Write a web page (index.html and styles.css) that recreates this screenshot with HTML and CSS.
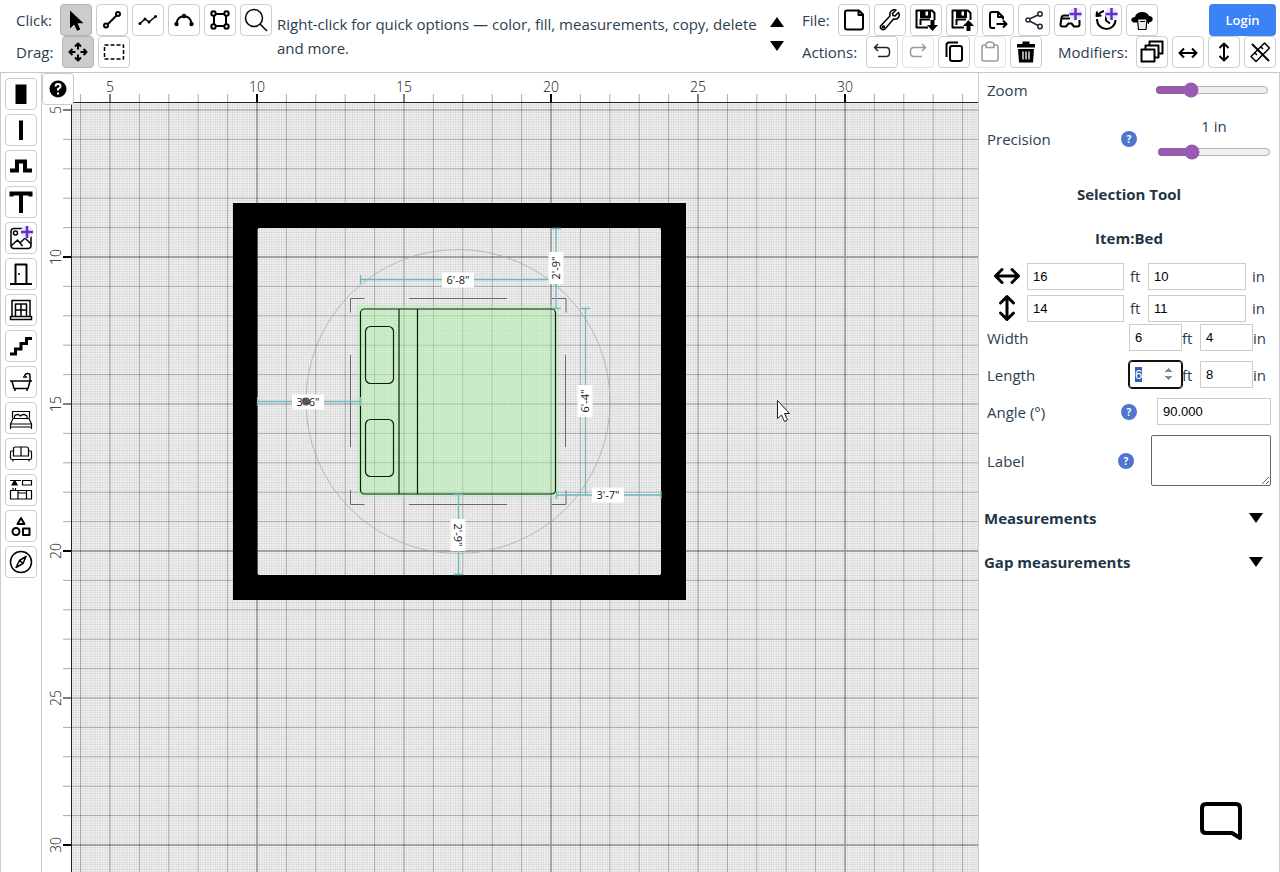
FILE: index.html
```html
<!DOCTYPE html>
<html lang="en">
<head>
<meta charset="utf-8">
<title>Floor plan editor</title>
<link rel="stylesheet" href="styles.css">
</head>
<body>
<header class="topbar">
  <div class="rows tools">
    <div class="row">
      <span class="lbl lbl-click">Click:</span>
      <button class="btn on" aria-label="Select"><svg class="ic solid" viewBox="0 0 24 24"><path d="M6 2.500v18l4.200-4 2.900 6.300 3.200-1.400-2.800-6.200h6z"/></svg></button>
      <button class="btn" aria-label="Line"><svg class="ic" viewBox="0 0 24 24"><path d="M7.500 16.500l9.500-9.500"/><circle cx="6" cy="17.500" r="2"/><circle cx="18" cy="6" r="2"/></svg></button>
      <button class="btn" aria-label="Polyline"><svg class="ic thin" viewBox="0 0 24 24"><path d="M4 15.500l5-4.500 4 3 6.500-5.500"/><g class="dot"><circle cx="4" cy="15.500" r="1.500"/><circle cx="9" cy="11" r="1.500"/><circle cx="13" cy="14" r="1.500"/><circle cx="19.500" cy="8.500" r="1.500"/></g></svg></button>
      <button class="btn" aria-label="Arc"><svg class="ic" viewBox="0 0 24 24"><path d="M4.500 16C5 5.500 19 5.500 19.500 16"/><g class="dot"><circle cx="4.500" cy="16" r="2.200"/><circle cx="12" cy="8" r="2.200"/><circle cx="19.500" cy="16" r="2.200"/></g></svg></button>
      <button class="btn" aria-label="Rectangle"><svg class="ic" viewBox="0 0 24 24"><path d="M8 6h8M8 18h8M6 8v8M18 8v8"/><circle cx="5.500" cy="5.500" r="2.200"/><circle cx="18.500" cy="5.500" r="2.200"/><circle cx="5.500" cy="18.500" r="2.200"/><circle cx="18.500" cy="18.500" r="2.200"/></svg></button>
      <button class="btn" aria-label="Search"><svg class="ic thin" viewBox="0 0 24 24"><circle cx="10" cy="10" r="8.500"/><path d="M16 16l7 7"/></svg></button>
    </div>
    <div class="row">
      <span class="lbl lbl-drag">Drag:</span>
      <button class="btn on" aria-label="Move"><svg class="ic" viewBox="0 0 24 24"><path d="M12 3.500v6M12 14.500v6M3.500 12h6M14.500 12h6M9 6.500l3-3 3 3M9 17.500l3 3 3-3M6.500 9l-3 3 3 3M17.500 9l3 3-3 3"/></svg></button>
      <button class="btn" aria-label="Box select"><svg class="ic thin" viewBox="0 0 24 24"><rect x="2.500" y="5" width="19" height="14" stroke-dasharray="4 2"/></svg></button>
    </div>
  </div>
  <p class="hint">Right-click for quick options — color, fill, measurements, copy, delete and more.</p>
  <div class="hint-nav">
    <button class="tri" aria-label="Previous tip"><svg width="14" height="12" viewBox="0 0 14 12"><path d="M7 1l7 10H0z"/></svg></button>
    <button class="tri" aria-label="Next tip"><svg width="14" height="12" viewBox="0 0 14 12"><path d="M7 11l7-10H0z"/></svg></button>
  </div>
  <div class="rows commands">
    <div class="row">
      <span class="lbl lbl-file">File:</span>
      <button class="btn" aria-label="New"><svg class="ic" viewBox="0 0 24 24"><path d="M5 2.500h12l4 4v13q0 2-2 2H5q-2 0-2-2v-15q0-2 2-2zM16.500 3v4H21"/></svg></button>
      <button class="btn" aria-label="Settings"><svg class="ic thin" viewBox="0 0 24 24"><path d="M20.500 4.500l-3.500 3.500-2-.500-.500-2 3.500-3.500c-3-1-7 1-6 6L3 17.500c-2 2.500 1.500 5.500 4 3.500l8.500-10c5 1 7-3.500 5-6.500z"/><circle cx="5.500" cy="19" r="1"/></svg></button>
      <button class="btn" aria-label="Save"><svg class="ic" viewBox="0 0 24 24"><path d="M14 19.500H2.500v-17H18l2.500 2.500v7M6.500 17v-5.500H16"/><path class="fill" d="M6 2h11v8H6z"/><path class="white" d="M11.500 3.500H14v4h-2.500z"/><path class="fill" d="M16.500 12h4v5H24l-5.500 6-5.500-6h3.500z"/></svg></button>
      <button class="btn" aria-label="Open"><svg class="ic" viewBox="0 0 24 24"><path d="M14 19.500H2.500v-17H18l2.500 2.500v7M6.500 17v-5.500H16"/><path class="fill" d="M6 2h11v8H6z"/><path class="white" d="M11.500 3.500H14v4h-2.500z"/><path class="fill" d="M16.500 23h4v-5H24l-5.500-6-5.500 6h3.500z"/></svg></button>
      <button class="btn" aria-label="Export"><svg class="ic" viewBox="0 0 24 24"><path d="M9 20H6q-2 0-2-2V6q0-2 2-2h6l5 5v2.500M12 4v5h5M10.500 16H20M17 12.500l3.500 3.500-3.500 3.500"/></svg></button>
      <button class="btn" aria-label="Share"><svg class="ic thin slate" viewBox="0 0 24 24"><path d="M7.500 11l8.500-4M7.500 13l8.500 4.500"/><circle cx="6" cy="12" r="2"/><circle cx="18" cy="6" r="2.200"/><circle cx="18" cy="18.500" r="2.200"/></svg></button>
      <button class="btn" aria-label="View in 3D"><svg class="ic" viewBox="0 0 24 24"><path d="M11 7.500H6q-2 0-2.500 2l-1 7q0 2 2 2H8l2.500-3h3l2.500 3h3.500q2 0 2-2V12M3 10.500h9"/><circle class="halo" cx="17.500" cy="6" r="6.500"/><path class="plus" d="M17.500 0v12M11.500 6h12"/></svg></button>
      <button class="btn" aria-label="History"><svg class="ic" viewBox="0 0 24 24"><path d="M3 3.500l-.500 4.500 5-.500M3 11c0 13 18 13 18.500 1M3 8q3-4 7-5M12 7v5.500l4 3"/><circle class="halo" cx="17.500" cy="6" r="6.500"/><path class="plus" d="M17.500 0v12M11.500 6h12"/></svg></button>
      <button class="btn" aria-label="Cloud files"><svg class="ic" viewBox="0 0 24 24"><path class="fill" d="M3.500 14.500C0 13 1 9 5 9c1-6 12-7 14-1 5 0 5 6 0 6.500z"/><path class="paper" d="M7.500 11h9.500l-1 10.500H8.500z"/><path class="fine" d="M10 13.500h5M10 9.500l.500-1.500h8v8"/></svg></button>
      <button class="login">Login</button>
    </div>
    <div class="row">
      <span class="lbl lbl-actions">Actions:</span>
      <button class="btn" aria-label="Undo"><svg class="ic thin slate" viewBox="0 0 24 24"><path d="M8 4L4.500 7.500 8 11M5 7.500h11q3.500 0 3.500 3.500v2q0 3.500-3.500 3.500H8"/></svg></button>
      <button class="btn off" disabled aria-label="Redo"><svg class="ic thin" viewBox="0 0 24 24"><path d="M16 4l3.500 3.500L16 11M19 7.500H8q-3.500 0-3.500 3.500v2q0 3.500 3.500 3.500h8"/></svg></button>
      <button class="btn" aria-label="Copy"><svg class="ic" viewBox="0 0 24 24"><rect x="8" y="6" width="12" height="15" rx="2"/><path d="M4.500 17V5q0-2.500 2.500-2.500h9"/></svg></button>
      <button class="btn off" disabled aria-label="Paste"><svg class="ic thin" viewBox="0 0 24 24"><path d="M8 5H6Q4 5 4 7v12q0 2 2 2h12q2 0 2-2V7q0-2-2-2h-2M8 7.500V5q0-3 4-3t4 3v2.500z"/></svg></button>
      <button class="btn" aria-label="Delete"><svg class="ic" viewBox="0 0 24 24"><path class="fill" d="M8.500 4V1.500h7V4H21v3.500H3V4zM4 9h16l-1 13.500H5z"/><path class="slots" d="M9 11.500v8M12 11.500v8M15 11.500v8"/></svg></button>
      <span class="lbl lbl-mod">Modifiers:</span>
      <button class="btn" aria-label="Duplicate"><svg class="ic" viewBox="0 0 24 24"><rect x="1.500" y="9.500" width="13" height="12"/><path d="M5.500 9V5.500h13v12H15M9.500 5V1.500h13v12H19"/></svg></button>
      <button class="btn" aria-label="Flip horizontal"><svg class="ic" viewBox="0 0 24 24"><path d="M4 13h16M8 8.500L3.500 13 8 17.500M16 8.500l4.500 4.500-4.500 4.500"/></svg></button>
      <button class="btn" aria-label="Flip vertical"><svg class="ic" viewBox="0 0 24 24"><path d="M12 4v16M7.500 8L12 3.500 16.500 8M7.500 16l4.500 4.500 4.500-4.500"/></svg></button>
      <button class="btn" aria-label="Measurements off"><svg class="ic thin" viewBox="0 0 24 24"><path d="M3 16.500L16.500 3l5 5L8 21.500zM7 13l2 2M10 10l2 2M13 7l2 2"/><path class="heavy" d="M4 4l17 17"/></svg></button>
    </div>
  </div>
</header>

<div class="body">
  <nav class="palette" aria-label="Items">
    <button class="btn" aria-label="Wall"><svg class="ic" viewBox="0 0 24 24"><path class="fill" d="M6.500 2.500h11v19.500h-11z"/></svg></button>
    <button class="btn" aria-label="Thin wall"><svg class="ic" viewBox="0 0 24 24"><path class="fill" d="M10 2.500h4V22h-4z"/></svg></button>
    <button class="btn" aria-label="Polygon wall"><svg class="ic" viewBox="0 0 24 24"><path class="wall" d="M1 16.500h7v-9h8v9h7"/></svg></button>
    <button class="btn" aria-label="Text"><svg class="ic" viewBox="0 0 24 24"><path class="wall" d="M2.500 6.500V3.500h19v3M12 3v20"/></svg></button>
    <button class="btn" aria-label="Image"><svg class="ic thin" viewBox="0 0 24 24"><rect x="2" y="2.500" width="20" height="20" rx="3"/><circle cx="6.500" cy="7" r="2"/><path d="M2 20l6.500-6 5 6M11 17l5-5 6 6"/><circle class="halo" cx="18" cy="6" r="6.500"/><path class="plus" d="M18 0v12M12 6h12"/></svg></button>
    <button class="btn" aria-label="Door"><svg class="ic" viewBox="0 0 24 24"><path d="M6.500 21.500v-19h11v19M1 22h22"/><circle class="fill" cx="10" cy="12" r="1"/></svg></button>
    <button class="btn" aria-label="Window"><svg class="ic thin" viewBox="0 0 24 24"><path d="M3 18V2.500h18V18M1.500 18.500h21v3h-21zM6.500 18V6h11v12M12 6v12M6.500 12h11"/></svg></button>
    <button class="btn" aria-label="Stairs"><svg class="ic" viewBox="0 0 24 24"><path class="tee" d="M1 20h5.500v-5H12v-5.500h5.500v-5H23"/></svg></button>
    <button class="btn" aria-label="Bathroom"><svg class="ic thin" viewBox="0 0 24 24"><path d="M1 11h22M3 11l2 7.500h14l2-7.500M6 19v2M18 19v2M21 11V6q0-3-3-2.500-2 .500-2.500 2.500M14 7h4"/></svg></button>
    <button class="btn" aria-label="Bedroom"><svg class="ic hair" viewBox="0 0 24 24"><path d="M3.500 12V5.500h17V12M1.500 23v-5L4 12.500h16l2.500 5.500v5M1.500 18h21M1.500 21h21M5.500 12V10q3-3 6 0 3-3 6.500 0v2"/></svg></button>
    <button class="btn" aria-label="Living room"><svg class="ic hair" viewBox="0 0 24 24"><path d="M4.500 9V7q0-2 2-2h11q2 0 2 2v2M12 5v9M4.500 9v5h15V9M4.500 9H2q-.500 0-.500 1v6q0 1.500 1.500 1.500h18q1.500 0 1.500-1.500v-6q0-1-.500-1h-2.500M4 17.500v2M20 17.500v2"/></svg></button>
    <button class="btn" aria-label="Kitchen"><svg class="ic hair" viewBox="0 0 24 24"><path d="M1 2.500h11M13.500 2.500h9v4.500h-9zM1.500 12.500h21v8.500h-21zM9 12.500V21M17.500 12.500V21M9 15h8.500M4 10v2M6.500 10v2"/><path class="fill" d="M5 2.500L2 7.500h7l-2.500-5z"/></svg></button>
    <button class="btn" aria-label="Shapes"><svg class="ic" viewBox="0 0 24 24"><path d="M12 4l3.500 6h-7z"/><circle cx="7" cy="17.500" r="3.500"/><rect x="14" y="14.500" width="6.500" height="6.500"/></svg></button>
    <button class="btn" aria-label="Compass"><svg class="ic thin" viewBox="0 0 24 24"><circle cx="12" cy="12" r="10.500"/><path d="M17 6.500l-3 7-7 4 3.500-7zM10.500 10.500l3.500 3"/></svg></button>
  </nav>

  <main class="stage">
    <svg class="plan" id="plan" role="img" aria-label="Floor plan">
      <g transform="translate(-42 -73)">
        <rect class="paperbg" x="72" y="103" width="4000" height="4000"/>
        <path id="gridFine" class="g-fine"/>
        <path id="gridFoot" class="g-foot"/>
        <path id="gridFive" class="g-five"/>
        <path id="gridTen" class="g-ten"/>
        <g id="ruler" class="ruler"></g>
        <path class="axis" d="M4000 102.500H71.500V4000"/>

        <path class="room" fill-rule="evenodd" d="M233 203h453v397H233zM259 228h401l1 1v345l-1 1H259l-1.500-1V229z"/>
        <circle class="orbit" cx="458" cy="401.500" r="152"/>

        <rect class="glow" x="357" y="305" width="201" height="192"/>
        <g class="bed">
          <rect x="360.500" y="309" width="195" height="185" rx="4"/>
          <path d="M399 309v185M417.500 309v185"/>
          <rect x="365.500" y="326.500" width="28" height="57" rx="5"/>
          <rect x="365.500" y="419.500" width="28" height="57" rx="5"/>
        </g>
        <path class="handles" d="M350.500 312.500v-14h14M409 298.500h98M552 298.500h14v14M350.500 355v92M565.500 355v92M350.500 490v14.500h14M409 504.500h98M552 504.500h14v-14"/>

        <path class="dim" d="M360.500 279.500H555M360.500 275v9M556 228v80M552 228.500h9M552 308.500h9M585.500 309v185M581 308.500h9M257.500 401.500H360M257.500 397v9M360.500 397v9M556 495H661M556.500 491v8M661 491v8M458.500 495v80M454 494.500h9M454 574.500h9"/>
        <g class="tag" transform="translate(458 280)"><rect x="-16" y="-7.500" width="32" height="15"/><text y="4">6'-8"</text></g>
        <g class="tag" transform="translate(556 268) rotate(-90)"><rect x="-16" y="-7.500" width="32" height="15"/><text y="4">2'-9"</text></g>
        <g class="tag" transform="translate(585 401) rotate(-90)"><rect x="-16" y="-7.500" width="32" height="15"/><text y="4">6'-4"</text></g>
        <g class="tag" transform="translate(608 495)"><rect x="-16" y="-7.500" width="32" height="15"/><text y="4">3'-7"</text></g>
        <g class="tag" transform="translate(458 535) rotate(90)"><rect x="-16" y="-7.500" width="32" height="15"/><text y="4">2'-9"</text></g>
        <g class="tag" transform="translate(308 402)"><rect x="-16" y="-7.500" width="32" height="15"/><text y="4">3'-6"</text></g>
        <circle class="knob" cx="306" cy="401.500" r="4"/>
        <path class="pointer" d="M777.500 400.500v18l4-3.500 3 6.500 3-1.500-3-6.500h5z"/>
      </g>
    </svg>
    <button class="btn help" aria-label="Help"><svg class="ic" viewBox="0 0 24 24"><circle class="fill" cx="12" cy="12" r="8.500"/><path class="qm" d="M9.500 9.500q0-2.500 2.500-2.500t2.500 2.300Q14.500 11 12 12v1.500M12 15.500v2"/></svg></button>
  </main>

  <aside class="panel">
    <div class="field f-zoom"><label for="zoom">Zoom</label><input id="zoom" type="range" value="29"></div>
    <div class="field f-prec"><label for="prec">Precision</label><button class="q" aria-label="About precision">?</button>
      <div class="stack"><output for="prec">1 in</output><input id="prec" type="range" value="28"></div></div>
    <h2>Selection Tool</h2>
    <h2>Item:Bed</h2>
    <div class="pos">
      <svg class="arrow" viewBox="0 0 28 28"><path d="M3 14h22M9 7.500L2.500 14 9 20.500M19 7.500l6.500 6.500-6.500 6.500"/></svg>
      <input id="xft" type="number" value="16"><label for="xft">ft</label><input id="xin" type="number" value="10"><label for="xin">in</label>
    </div>
    <div class="pos">
      <svg class="arrow" viewBox="0 0 28 28"><path d="M14 3v22M7.500 9L14 2.500 20.500 9M7.500 19l6.500 6.500 6.500-6.500"/></svg>
      <input id="yft" type="number" value="14"><label for="yft">ft</label><input id="yin" type="number" value="11"><label for="yin">in</label>
    </div>
    <div class="field size"><span class="name">Width</span><input id="wft" type="number" value="6"><label for="wft">ft</label><input id="win" type="number" value="4"><label for="win">in</label></div>
    <div class="field size"><span class="name">Length</span><input class="active" id="lft" type="number" value="6"><label for="lft">ft</label><input id="lin" type="number" value="8"><label for="lin">in</label></div>
    <div class="field f-angle"><label for="angle">Angle (°)</label><button class="q" aria-label="About angle">?</button><input id="angle" type="text" value="90.000"></div>
    <div class="field f-label"><label for="lab">Label</label><button class="q" aria-label="About label">?</button><textarea id="lab"></textarea></div>
    <button class="fold">Measurements<svg width="14" height="12" viewBox="0 0 14 12"><path d="M7 11l7-10H0z"/></svg></button>
    <button class="fold">Gap measurements<svg width="14" height="12" viewBox="0 0 14 12"><path d="M7 11l7-10H0z"/></svg></button>
  </aside>
</div>
<button class="chat" aria-label="Chat"><svg width="44" height="40" viewBox="0 0 44 40"><path d="M7 3h30q4 0 4 4v30l-8-5H7q-4 0-4-4V7q0-4 4-4z"/></svg></button>
<script src="plan.js"></script>
</body>
</html>
```
FILE: styles.css
```css
* { box-sizing: border-box; }
body {
  margin: 0;
  height: 100vh;
  display: flex;
  flex-direction: column;
  overflow: hidden;
  background: #fff;
  color: #2c3e50;
  font: 15px/24px "Open Sans", "Noto Sans", sans-serif;
}
button { font: inherit; color: inherit; padding: 0; margin: 0; background: none; border: 0; }
svg { display: block; }

.topbar { display: flex; padding: 4px 4px 4px 16px; border-bottom: 1px solid #c8c8c8; }
.row { display: flex; gap: 4px; align-items: center; }
.lbl { white-space: nowrap; }
.lbl-click { width: 40px; }
.lbl-drag { width: 42px; }
.lbl-file { width: 32px; }
.lbl-actions { width: 60px; }
.lbl-mod { width: 74px; margin-left: 12px; }
.hint { flex: 1; margin: 0; padding: 8px 0 0 5px; }
.hint-nav { width: 32px; display: flex; flex-direction: column; gap: 12px; padding-top: 12px; }
.tri, .tri svg { height: 12px; width: 14px; }

.btn {
  flex: none;
  width: 32px;
  height: 32px;
  display: grid;
  place-items: center;
  background: #fff;
  border: 1px solid #ccc;
  border-radius: 4px;
}
.btn.on { background: #ccc; border-color: #b4b4b4; }
.btn.off { border-color: #e2e2e2; }
.btn.off .ic { stroke: #999; }
.ic { width: 24px; height: 24px; fill: none; stroke: #000; stroke-width: 2; stroke-linejoin: round; overflow: visible; }
.ic.thin { stroke-width: 1.5; }
.ic.hair { stroke-width: 1.2; }
.ic.solid { fill: #000; stroke: none; }
.ic.slate { stroke: #223; }
.fill, .dot { fill: #000; stroke: none; }
.white { fill: #fff; stroke: none; }
.paper { fill: #eee; stroke-width: 1.2; }
.fine { stroke-width: 1; }
.slots { stroke: #fff; stroke-width: 1.3; }
.heavy { stroke-width: 2; }
.halo { fill: #e9e4f6; stroke: none; }
.plus { stroke: #6230c8; stroke-width: 2.5; }
.wall { stroke-width: 4; stroke-linejoin: miter; }
.tee { stroke-width: 3; stroke-linejoin: miter; }
.qm { stroke: #fff; }
.login { margin-left: auto; width: 67px; height: 32px; border-radius: 4px; background: #3b82f6; color: #fff; font-weight: 600; font-size: 13px; }

.body { flex: 1; min-height: 0; display: flex; }
.palette { width: 42px; display: flex; flex-direction: column; gap: 4px; padding: 5px 4px; border: solid #ccc; border-width: 0 1px; }
.stage { flex: 1; min-width: 0; position: relative; overflow: hidden; }
.help { position: absolute; left: 0; top: 0; }
.plan { width: 100%; height: 100%; }
.paperbg { fill: #f3f3f3; }
.g-fine, .g-foot, .g-five, .g-ten { fill: none; }
.g-fine { stroke: rgba(0, 0, 0, .09); stroke-width: .8; }
.g-foot { stroke: rgba(0, 0, 0, .3); }
.g-five { stroke: rgba(0, 0, 0, .4); }
.g-ten { stroke: rgba(0, 0, 0, .42); stroke-width: 1.4; }
.ruler { font-size: 14px; font-weight: 300; }
.ruler text { fill: #111; text-anchor: middle; }
.ruler .minor { stroke: #aaa; }
.ruler .mid { stroke: #555; stroke-width: 1.5; }
.ruler .major { stroke: #000; stroke-width: 2; }
.axis { fill: none; stroke: #222; }
.room { fill: #000; }
.orbit { fill: none; stroke: #aaa; stroke-width: .8; }
.glow { fill: rgba(171, 240, 168, .5); filter: blur(1px); }
.bed { fill: none; stroke: #0b1f0b; stroke-width: 1.2; }
.handles { fill: none; stroke: #666; }
.dim { fill: none; stroke: #6bb9bd; stroke-width: 1.3; }
.tag rect { fill: #fff; }
.tag text { fill: #111; font-size: 11px; text-anchor: middle; }
.knob { fill: rgba(50, 50, 50, .8); }
.pointer { fill: #fff; stroke: #222; }

.panel { width: 302px; border: solid #ccc; border-width: 0 1px; padding: 5px 8px 0; overflow: hidden; }
.panel h2 { margin: 0 0 20px; font-size: 15px; line-height: 24px; font-weight: 700; text-align: center; color: #213547; }
.field { display: flex; align-items: center; }
.field > label:first-child, .name { flex: 1; }
input[type="range"] { width: 114px; height: 16px; margin: 0; accent-color: #9b59b6; display: block; }
.f-zoom { height: 24px; padding-right: 2px; }
.f-prec { height: 56px; margin: 9px 0 15px; }
.stack { margin-left: 20px; width: 114px; text-align: center; }
.stack output { display: block; height: 30px; }
.stack input { margin-bottom: 4px; }
.q { width: 16px; height: 16px; border-radius: 50%; background: #4f74d2; color: #fff; font-size: 10px; font-weight: 700; line-height: 16px; text-align: center; }
input[type="number"], input[type="text"] {
  height: 27px;
  margin: 0;
  border: 1px solid #ccc;
  padding: 0 5px;
  font: 13px "Liberation Sans", Arial, sans-serif;
  color: #000;
  background: #fff;
}
input[type="number"]::-webkit-inner-spin-button { opacity: 0; }
input.active::-webkit-inner-spin-button { opacity: 1; }
input.active, input.active:focus { border-color: #111; border-radius: 3px; outline: 1px solid #111; outline-offset: 0; }
input::selection { background: #2f62b5; color: #fff; }
.pos { display: grid; grid-template-columns: 40px 97px 24px 98px 1fr; align-items: center; height: 32px; }
.pos label { padding-left: 6px; }
.pos input { width: 100%; }
.arrow { width: 28px; height: 28px; margin-left: 6px; fill: none; stroke: #000; stroke-width: 3; stroke-linecap: round; stroke-linejoin: round; }
h2 + .pos { margin-top: -10px; }
.size { height: 27px; margin-bottom: 10px; }
.size input { width: 53px; }
.size label { width: 18px; }
.f-angle { height: 27px; margin-bottom: 10px; }
.f-angle input { width: 114px; margin-left: 20px; }
.f-label { height: 51px; margin-bottom: 20px; }
.f-label textarea { width: 120px; height: 51px; margin-left: 17px; border: 1px solid #666; border-radius: 2px; background: #fff; }
.fold { display: flex; justify-content: space-between; align-items: center; height: 24px; margin-bottom: 20px; padding: 0 8px 0 0; font-weight: 700; color: #213547; }
.panel .fold { margin-left: -3px; width: calc(100% + 3px); }
.fold svg { fill: #000; }

.chat { position: fixed; right: 37px; bottom: 31px; }
.chat path { fill: #fff; stroke: #000; stroke-width: 4; stroke-linejoin: round; }
```
FILE: plan.js
```js
const FOOT = 29.4;
const X0 = 257 - 10 * FOOT;
const Y0 = 257 - 10 * FOOT;
const LEFT = 72, TOP = 103;
const NS = "http://www.w3.org/2000/svg";
const ruler = document.getElementById("ruler");
const plan = document.getElementById("plan");

function add(tag, attrs, text) {
  const el = document.createElementNS(NS, tag);
  for (const k in attrs) el.setAttribute(k, attrs[k]);
  if (text !== undefined) el.textContent = text;
  ruler.appendChild(el);
}

function draw() {
  const right = 42 + plan.clientWidth, bottom = 73 + plan.clientHeight;
  const paths = { gridFine: "", gridFoot: "", gridFive: "", gridTen: "" };
  ruler.textContent = "";
  const count = Math.ceil(Math.max(right - X0, bottom - Y0) / FOOT * 12);
  for (let i = 0; i < count; i++) {
    const x = X0 + i * FOOT / 12, y = Y0 + i * FOOT / 12;
    const showX = x > LEFT && x < right, showY = y > TOP && y < bottom;
    const foot = i / 12;
    const fine = i % 12 !== 0;
    const key = fine ? "gridFine" : foot % 10 === 0 ? "gridTen" : foot % 5 === 0 ? "gridFive" : "gridFoot";
    if (showX) paths[key] += `M${x} ${TOP}V${bottom}`;
    if (showY) paths[key] += `M${LEFT} ${y}H${right}`;
    if (fine) continue;
    const cls = foot % 10 === 0 ? "major" : foot % 5 === 0 ? "mid" : "minor";
    if (showX) {
      add("path", { class: cls, d: `M${x} 94V102` });
      if (foot % 5 === 0) add("text", { x, y: 92 }, foot);
    }
    if (showY) {
      add("path", { class: cls, d: `M63 ${y}H71` });
      if (foot % 5 === 0) add("text", { transform: `translate(61 ${y}) rotate(-90)` }, foot);
    }
  }
  for (const id in paths) document.getElementById(id).setAttribute("d", paths[id]);
}
draw();
window.addEventListener("resize", draw);

const active = document.getElementById("lft");
active.focus();
active.select();
```
